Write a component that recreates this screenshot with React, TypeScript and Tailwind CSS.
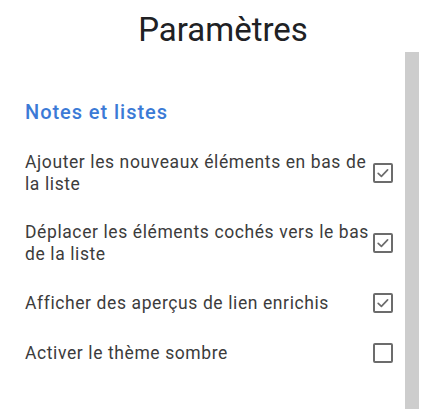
import React from "react";

const rows = [
  { label: "Ajouter les nouveaux éléments en bas de la liste", checked: true },
  { label: "Déplacer les éléments cochés vers le bas de la liste", checked: true },
  { label: "Afficher des aperçus de lien enrichis", checked: true },
  { label: "Activer le thème sombre", checked: false },
];

function Box({ checked }: { checked: boolean }) {
  return (
    <div className="w-[20px] h-[20px] shrink-0 rounded-[2px] border-2 border-[#6c6c6c] flex items-center justify-center">
      {checked && (
        <svg width="16" height="16" viewBox="0 0 16 16" fill="none">
          <path d="M3.2 8.4 L6.4 11.3 L12.6 4.9" stroke="#6c6c6c" strokeWidth="1.7" strokeLinecap="round" strokeLinejoin="round" />
        </svg>
      )}
    </div>
  );
}

export default function App() {
  return (
    <div className="w-[445px] h-[409px] bg-white overflow-hidden flex flex-col" style={{ fontFamily: "Roboto, 'Noto Sans', sans-serif" }}>
      <div className="h-[52px] flex justify-center items-start pt-[10px]">
        <h1 className="text-[33px] leading-[40px] text-[#202124] font-normal pl-[1px]">Paramètres</h1>
      </div>
      <div className="flex-1 flex pr-[26px]">
        <div className="flex-1 pl-[25px] pr-[12px] pt-[48px]">
          <h2 className="text-[20px] leading-[24px] font-medium text-[#3b7ad6] tracking-[0.95px]">Notes et listes</h2>
          <div className="mt-[14px] flex flex-col">
            {rows.map((r) => (
              <div key={r.label} className="flex items-center min-h-[50px] py-[13px]">
                <span className="flex-1 text-[17.5px] leading-[22px] text-[#3c3c3c] tracking-[0.6px]">{r.label}</span>
                <Box checked={r.checked} />
              </div>
            ))}
          </div>
        </div>
        <div className="w-[14px] bg-[#cdcdcd]" />
      </div>
    </div>
  );
}
